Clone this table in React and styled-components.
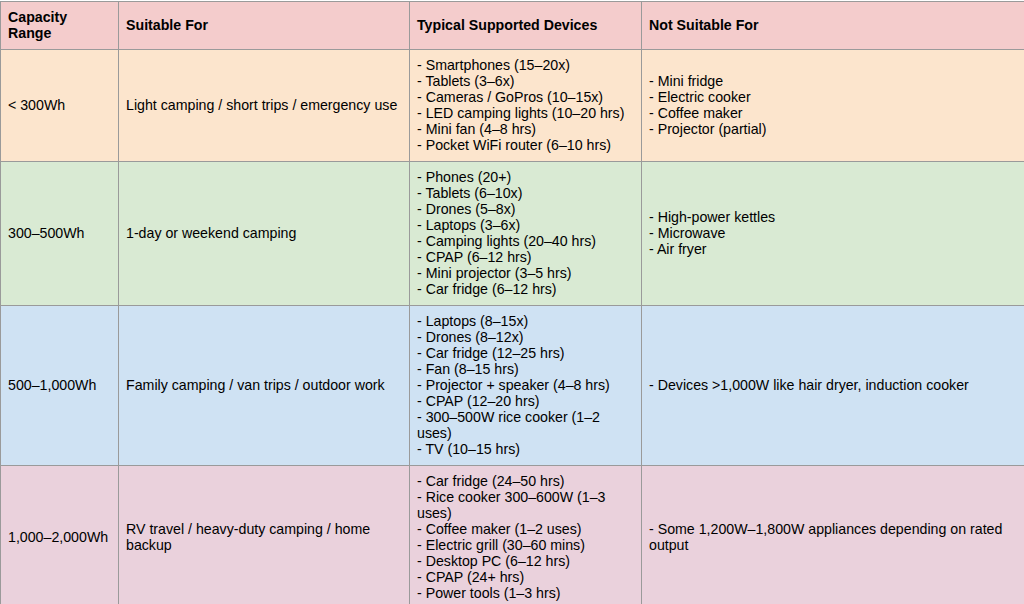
import React from "react";
import styled, { createGlobalStyle } from "styled-components";

const GlobalStyle = createGlobalStyle`
  html, body {
    margin: 0;
    padding: 0;
    background: #ffffff;
    overflow: hidden;
  }
  body {
    font-family: "Liberation Sans", Arial, sans-serif;
    color: #000000;
  }
`;

const tones = {
  head: "#f4cccc",
  peach: "#fce5cd",
  green: "#d9ead3",
  blue: "#cfe2f3",
  pink: "#ead1dc",
};

const Page = styled.div`
  width: 1032px;
  padding-top: 1px;
`;

const Table = styled.table`
  width: 1032px;
  border-collapse: collapse;
  table-layout: fixed;
  font-size: 14.2px;
  line-height: 16px;
`;

const Row = styled.tr`
  background: ${({ $tone }) => tones[$tone]};
`;

const HeadCell = styled.th`
  border: 1px solid #9a9a9a;
  padding: 7px 7px 8px;
  text-align: left;
  vertical-align: middle;
  font-weight: 700;
`;

const Cell = styled.td`
  border: 1px solid #9a9a9a;
  padding: 7px 7px 8px;
  text-align: left;
  vertical-align: middle;
  font-weight: 400;
`;

const Line = styled.div`
  white-space: normal;
`;

const rows = [
  {
    tone: "peach",
    range: "< 300Wh",
    suitable: "Light camping / short trips / emergency use",
    devices: [
      "Smartphones (15–20x)",
      "Tablets (3–6x)",
      "Cameras / GoPros (10–15x)",
      "LED camping lights (10–20 hrs)",
      "Mini fan (4–8 hrs)",
      "Pocket WiFi router (6–10 hrs)",
    ],
    notSuitable: ["Mini fridge", "Electric cooker", "Coffee maker", "Projector (partial)"],
  },
  {
    tone: "green",
    range: "300–500Wh",
    suitable: "1-day or weekend camping",
    devices: [
      "Phones (20+)",
      "Tablets (6–10x)",
      "Drones (5–8x)",
      "Laptops (3–6x)",
      "Camping lights (20–40 hrs)",
      "CPAP (6–12 hrs)",
      "Mini projector (3–5 hrs)",
      "Car fridge (6–12 hrs)",
    ],
    notSuitable: ["High-power kettles", "Microwave", "Air fryer"],
  },
  {
    tone: "blue",
    range: "500–1,000Wh",
    suitable: "Family camping / van trips / outdoor work",
    devices: [
      "Laptops (8–15x)",
      "Drones (8–12x)",
      "Car fridge (12–25 hrs)",
      "Fan (8–15 hrs)",
      "Projector + speaker (4–8 hrs)",
      "CPAP (12–20 hrs)",
      "300–500W rice cooker (1–2 uses)",
      "TV (10–15 hrs)",
    ],
    notSuitable: ["Devices >1,000W like hair dryer, induction cooker"],
  },
  {
    tone: "pink",
    range: "1,000–2,000Wh",
    suitable: "RV travel / heavy-duty camping / home backup",
    devices: [
      "Car fridge (24–50 hrs)",
      "Rice cooker 300–600W (1–3 uses)",
      "Coffee maker (1–2 uses)",
      "Electric grill (30–60 mins)",
      "Desktop PC (6–12 hrs)",
      "CPAP (24+ hrs)",
      "Power tools (1–3 hrs)",
    ],
    notSuitable: ["Some 1,200W–1,800W appliances depending on rated output"],
  },
];

const DashList = ({ items }) => (
  <>
    {items.map((item, i) => (
      <Line key={i}>- {item}</Line>
    ))}
  </>
);

export default function App() {
  return (
    <Page>
      <GlobalStyle />
      <Table>
        <colgroup>
          <col style={{ width: "118px" }} />
          <col style={{ width: "291px" }} />
          <col style={{ width: "232px" }} />
          <col />
        </colgroup>
        <thead>
          <Row $tone="head">
            <HeadCell>Capacity Range</HeadCell>
            <HeadCell>Suitable For</HeadCell>
            <HeadCell>Typical Supported Devices</HeadCell>
            <HeadCell>Not Suitable For</HeadCell>
          </Row>
        </thead>
        <tbody>
          {rows.map((row) => (
            <Row key={row.range} $tone={row.tone}>
              <Cell>{row.range}</Cell>
              <Cell>{row.suitable}</Cell>
              <Cell>
                <DashList items={row.devices} />
              </Cell>
              <Cell>
                <DashList items={row.notSuitable} />
              </Cell>
            </Row>
          ))}
        </tbody>
      </Table>
    </Page>
  );
}
